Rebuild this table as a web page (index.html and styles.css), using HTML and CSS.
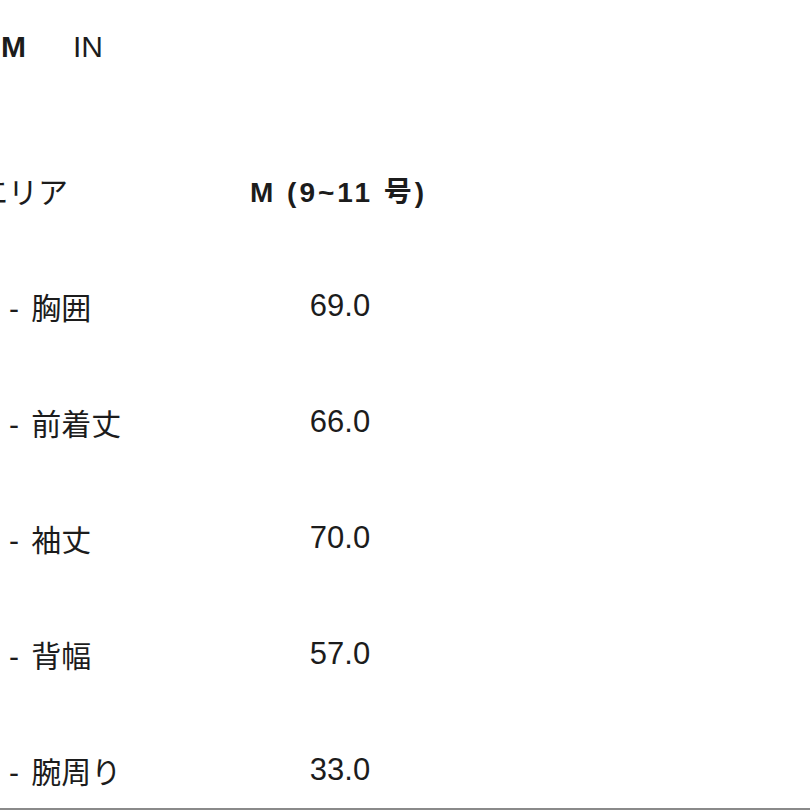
FILE: index.html
```html
<!DOCTYPE html>
<html lang="ja">
<head>
<meta charset="utf-8">
<link rel="stylesheet" href="styles.css">
</head>
<body>
<div class="page">
  <div class="tabs">
    <span class="tab active">M</span>
    <span class="tab">IN</span>
  </div>
  <div class="table">
    <div class="row head">
      <div class="label cut">エリア</div>
      <div class="value">M (9~11 号)</div>
    </div>
    <div class="row">
      <div class="label">- 胸囲</div>
      <div class="value">69.0</div>
    </div>
    <div class="row">
      <div class="label">- 前着丈</div>
      <div class="value">66.0</div>
    </div>
    <div class="row">
      <div class="label">- 袖丈</div>
      <div class="value">70.0</div>
    </div>
    <div class="row">
      <div class="label">- 背幅</div>
      <div class="value">57.0</div>
    </div>
    <div class="row">
      <div class="label">- 腕周り</div>
      <div class="value">33.0</div>
    </div>
  </div>
  <div class="rule"></div>
</div>
</body>
</html>
```

FILE: styles.css
```css
html, body {
  margin: 0;
  padding: 0;
  background: #ffffff;
}
body {
  width: 810px;
  height: 810px;
  overflow: hidden;
  font-family: "Liberation Sans", "Noto Sans CJK JP", sans-serif;
  color: #1c1c1c;
}
.page {
  display: flex;
  flex-direction: column;
  height: 810px;
}
.tabs {
  flex-shrink: 0;
  display: flex;
  align-items: center;
  gap: 48px;
  height: 93px;
  padding-left: 1px;
  font-size: 30px;
  box-sizing: border-box;
}
.tab.active {
  font-weight: 700;
  letter-spacing: -1px;
}
.table {
  flex: 1;
  min-height: 0;
  overflow: hidden;
  display: flex;
  flex-direction: column;
  margin-top: 39px;
}
.row {
  flex-shrink: 0;
  display: grid;
  grid-template-columns: 250px 180px;
  align-items: center;
  height: 116px;
}
.label {
  padding-left: 9px;
  font-size: 30px;
  word-spacing: 4px;
  white-space: nowrap;
}
.label.cut {
  padding-left: 0;
  margin-left: -22px;
}
.value {
  text-align: center;
  font-size: 31px;
  white-space: nowrap;
}
.head .value {
  text-align: left;
  font-weight: 700;
  font-size: 28px;
  letter-spacing: 3px;
}
.rule {
  flex-shrink: 0;
  height: 2px;
  background: #8a8a8a;
}
```
